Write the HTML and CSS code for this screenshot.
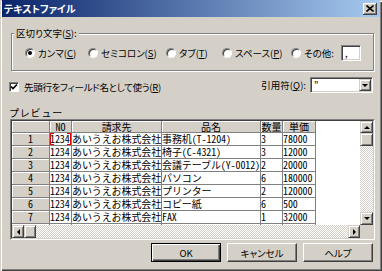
FILE: index.html
```html
<!DOCTYPE html>
<html lang="ja">
	<head>
		<meta charset="utf-8">
		<title>テキストファイル</title>
		<link rel="stylesheet" href="styles.css">
	</head>
	<body>
		<div class="window">
			<div class="titlebar">
				<span class="title">テキストファイル</span>
				<span class="close">
					<svg width="8" height="7" viewBox="0 0 8 7"><path d="M0.5 0.5 L7.5 6.5 M7.5 0.5 L0.5 6.5" stroke="#000" stroke-width="1.6"/></svg>
				</span>
			</div>

			<fieldset class="group">
				<legend>区切り文字(<u>S</u>):</legend>
				<div class="radios">
					<label class="radio r1"><span class="dot on"></span>カンマ(<u>C</u>)</label>
					<label class="radio r2"><span class="dot"></span>セミコロン(<u>S</u>)</label>
					<label class="radio r3"><span class="dot"></span>タブ(<u>T</u>)</label>
					<label class="radio r4"><span class="dot"></span>スペース(<u>P</u>)</label>
					<label class="radio r5"><span class="dot"></span>その他:</label>
					<span class="field">,</span>
				</div>
			</fieldset>

			<div class="opts">
				<label class="check">
					<span class="box">
						<svg width="8" height="8" viewBox="0 0 8 8"><path d="M1 3.5 L3 5.5 L7 1.5" stroke="#000" stroke-width="1.6" fill="none"/></svg>
					</span>
					先頭行をフィールド名として使う(<u>R</u>)
				</label>
				<span class="quote-label">引用符(<u>Q</u>):</span>
				<div class="combo">
					<span class="combo-value">"</span>
					<span class="sbtn"><i class="arr down"></i></span>
				</div>
			</div>

			<div class="preview-label">プレビュー</div>

			<div class="frame">
				<div class="frame-inner">
					<div class="sheet">
						<div class="c h"></div><div class="c h">NO</div><div class="c h">請求先</div><div class="c h">品名</div><div class="c h">数量</div><div class="c h">単価</div>

						<div class="c h">1</div><div class="c focus">1234</div><div class="c">あいうえお株式会社</div><div class="c">事務机(T-1204)</div><div class="c">3</div><div class="c">78000</div>
						<div class="c h">2</div><div class="c">1234</div><div class="c">あいうえお株式会社</div><div class="c">椅子(C-4321)</div><div class="c">3</div><div class="c">12000</div>
						<div class="c h">3</div><div class="c">1234</div><div class="c">あいうえお株式会社</div><div class="c">会議テーブル(Y-0012)</div><div class="c">2</div><div class="c">20000</div>
						<div class="c h">4</div><div class="c">1234</div><div class="c">あいうえお株式会社</div><div class="c">パソコン</div><div class="c">6</div><div class="c">180000</div>
						<div class="c h">5</div><div class="c">1234</div><div class="c">あいうえお株式会社</div><div class="c">プリンター</div><div class="c">2</div><div class="c">120000</div>
						<div class="c h">6</div><div class="c">1234</div><div class="c">あいうえお株式会社</div><div class="c">コピー紙</div><div class="c">6</div><div class="c">500</div>
						<div class="c h">7</div><div class="c">1234</div><div class="c">あいうえお株式会社</div><div class="c">FAX</div><div class="c">1</div><div class="c">32000</div>
						<div class="c h">8</div><div class="c">1234</div><div class="c">あいうえお株式会社</div><div class="c">電話機</div><div class="c">1</div><div class="c">14000</div>
					</div>

					<div class="vscroll">
						<span class="sbtn up-btn"><i class="arr up"></i></span>
						<span class="thumb v"></span>
						<span class="track"></span>
						<span class="sbtn"><i class="arr down"></i></span>
					</div>

					<div class="hscroll">
						<span class="sbtn h-btn"><i class="arr left"></i></span>
						<span class="thumb hz"></span>
						<span class="track"></span>
						<span class="sbtn h-btn"><i class="arr right"></i></span>
					</div>

					<div class="corner"></div>
				</div>
			</div>

			<div class="buttons">
				<button class="btn default">OK</button>
				<button class="btn">キャンセル</button>
				<button class="btn">ヘルプ</button>
			</div>
		</div>
	</body>
</html>
```

FILE: styles.css
```css
/* Base */
* {
	margin: 0;
	padding: 0;
	box-sizing: border-box;
}

body {
	width: 382px;
	height: 271px;
	overflow: hidden;
	background: #d4d0c8;
	font-family: "Noto Sans CJK JP", sans-serif;
	font-size: 9.5px;
	line-height: 12px;
	color: #000;
}

u {
	text-decoration: underline;
	text-underline-offset: 1px;
}

/* Dialog window with classic raised frame */
.window {
	width: 382px;
	height: 271px;
	display: flex;
	flex-direction: column;
	padding: 0 2px 3px 2px;
	box-shadow:
		inset 1px 1px #d4d0c8,
		inset 2px 2px #fff,
		inset -1px -1px #404040,
		inset -2px -2px #808080;
}

.titlebar {
	height: 17px;
	flex: none;
	display: flex;
	align-items: center;
	justify-content: space-between;
	padding: 0 3px 0 2px;
	background: linear-gradient(to right, #0a246a, #a6caf0);
}

.title {
	color: #fff;
	font-size: 10px;
	font-weight: bold;
	font-feature-settings: "palt";
}

.close {
	width: 14px;
	height: 12px;
	display: flex;
	align-items: center;
	justify-content: center;
	background: #d4d0c8;
	box-shadow:
		inset -1px -1px #404040,
		inset 1px 1px #fff,
		inset -2px -2px #808080;
}

/* Delimiter group box (etched) */
.group {
	margin: 10px 0 0 9px;
	width: 363px;
	height: 44px;
	padding: 8px 2px 0 2px;
	border: 1px solid #808080;
	box-shadow: inset 1px 1px #fff, 1px 1px #fff;
}

.group legend {
	padding: 0 2px;
	background: #d4d0c8;
	font-feature-settings: "palt";
}

.radios {
	display: flex;
	align-items: center;
	height: 12px;
	padding-left: 11px;
}

.radio {
	display: flex;
	align-items: center;
	flex: none;
	font-feature-settings: "palt";
}

.r1 { width: 63px; }
.r2 { width: 78px; }
.r3 { width: 56px; }
.r4 { width: 69px; }
.r5 { width: 50px; }

.dot {
	width: 10px;
	height: 10px;
	margin-right: 3px;
	border-radius: 50%;
	background: #fff;
	border: 1px solid;
	border-color: #808080 #fff #fff #808080;
	box-shadow: inset 1px 1px #404040;
	display: flex;
	align-items: center;
	justify-content: center;
}

.dot.on::after {
	content: "";
	width: 4px;
	height: 4px;
	border-radius: 50%;
	background: #000;
}

.field {
	width: 20px;
	height: 16px;
	flex: none;
	padding: 1px 3px;
	background: #fff;
	border: 1px solid;
	border-color: #808080 #fff #fff #808080;
	box-shadow: inset 1px 1px #404040, inset -1px -1px #d4d0c8;
}

/* Header option row */
.opts {
	margin: 6px 7px 0 7px;
	height: 16px;
	display: flex;
	align-items: center;
}

.check {
	display: flex;
	align-items: center;
	font-feature-settings: "palt";
	letter-spacing: -0.3px;
	margin-top: 3px;
}

.box {
	width: 10px;
	height: 10px;
	margin-right: 5px;
	background: #fff;
	border: 1px solid;
	border-color: #808080 #fff #fff #808080;
	box-shadow: inset 1px 1px #404040;
	display: flex;
	align-items: center;
	justify-content: center;
}

.quote-label {
	margin-left: auto;
	margin-right: 4px;
	font-feature-settings: "palt";
}

.combo {
	width: 63px;
	height: 16px;
	display: flex;
	padding: 2px;
	background: #fff;
	border: 1px solid;
	border-color: #808080 #fff #fff #808080;
	box-shadow: inset 1px 1px #404040, inset -1px -1px #d4d0c8;
}

.combo-value {
	flex: 1;
	line-height: 10px;
	padding-left: 1px;
}

.combo .sbtn {
	width: 12px;
	height: 12px;
	margin: -1px -1px 0 0;
}

.preview-label {
	margin: 14px 0 0 7px;
	height: 12px;
	font-size: 10px;
	letter-spacing: 0.8px;
}

/* Preview grid */
.frame {
	margin-left: 8px;
	width: 365px;
	height: 121px;
	flex: none;
	border: 1px solid;
	border-color: #808080 #fff #fff #808080;
}

.frame-inner {
	height: 100%;
	border: 1px solid;
	border-color: #404040 #d4d0c8 #d4d0c8 #404040;
	display: grid;
	grid-template-columns: 1fr 13px;
	grid-template-rows: 1fr 13px;
}

.sheet {
	display: grid;
	grid-template-columns: 38px 22px 90px 99px 22px 33px;
	grid-template-rows: 12px;
	grid-auto-rows: 13px;
	align-content: start;
	background: #fff;
	overflow: hidden;
	font-size: 10px;
	letter-spacing: -0.1px;
	font-feature-settings: "hwid";
}

.c {
	border-right: 1px solid #808080;
	border-bottom: 1px solid #808080;
	white-space: nowrap;
	overflow: hidden;
	line-height: 12px;
}

.c.h {
	background: #d4d0c8;
	text-align: center;
	line-height: 11px;
	box-shadow: inset 1px 1px #fff;
}

/* Current-cell bracket marks */
.focus {
	position: relative;
}

.focus::before,
.focus::after {
	content: "";
	position: absolute;
	z-index: 1;
	top: 0;
	bottom: 0;
	width: 3px;
	border: 1px solid #e00000;
}

.focus::before {
	left: 0;
	border-right: 0;
}

.focus::after {
	right: 0;
	border-left: 0;
}

/* Scrollbars */
.track {
	flex: 1;
	background: repeating-conic-gradient(#fff 0 25%, #d4d0c8 0 50%) 0 0 / 2px 2px;
}

.vscroll {
	display: flex;
	flex-direction: column;
}

.hscroll {
	display: flex;
}

.corner {
	background: #d4d0c8;
}

.sbtn,
.thumb {
	flex: none;
	display: flex;
	align-items: center;
	justify-content: center;
	background: #d4d0c8;
	border: 1px solid;
	border-color: #d4d0c8 #404040 #404040 #d4d0c8;
	box-shadow: inset 1px 1px #fff, inset -1px -1px #808080;
}

.vscroll .sbtn { height: 13px; }
.vscroll .up-btn { height: 12px; }
.thumb.v { height: 13px; }
.hscroll .sbtn { width: 12px; }
.thumb.hz { width: 12px; }

.arr {
	width: 0;
	height: 0;
	border: 3px solid transparent;
}

.arr.up { border-bottom-color: #000; border-top-width: 0; }
.arr.down { border-top-color: #000; border-bottom-width: 0; }
.arr.left { border-right-color: #000; border-left-width: 0; }
.arr.right { border-left-color: #000; border-right-width: 0; }

/* Dialog buttons */
.buttons {
	margin: 3px 7px 0 0;
	display: flex;
	justify-content: flex-end;
	gap: 6px;
}

.btn {
	width: 70px;
	height: 19px;
	font: inherit;
	font-feature-settings: "palt";
	background: #d4d0c8;
	color: #000;
	border: 1px solid;
	border-color: #fff #404040 #404040 #fff;
	box-shadow: inset -1px -1px #808080, inset 1px 1px #d4d0c8;
}

.btn.default {
	border-color: #000;
	box-shadow: inset 1px 1px #fff, inset -1px -1px #404040, inset -2px -2px #808080;
}
```
